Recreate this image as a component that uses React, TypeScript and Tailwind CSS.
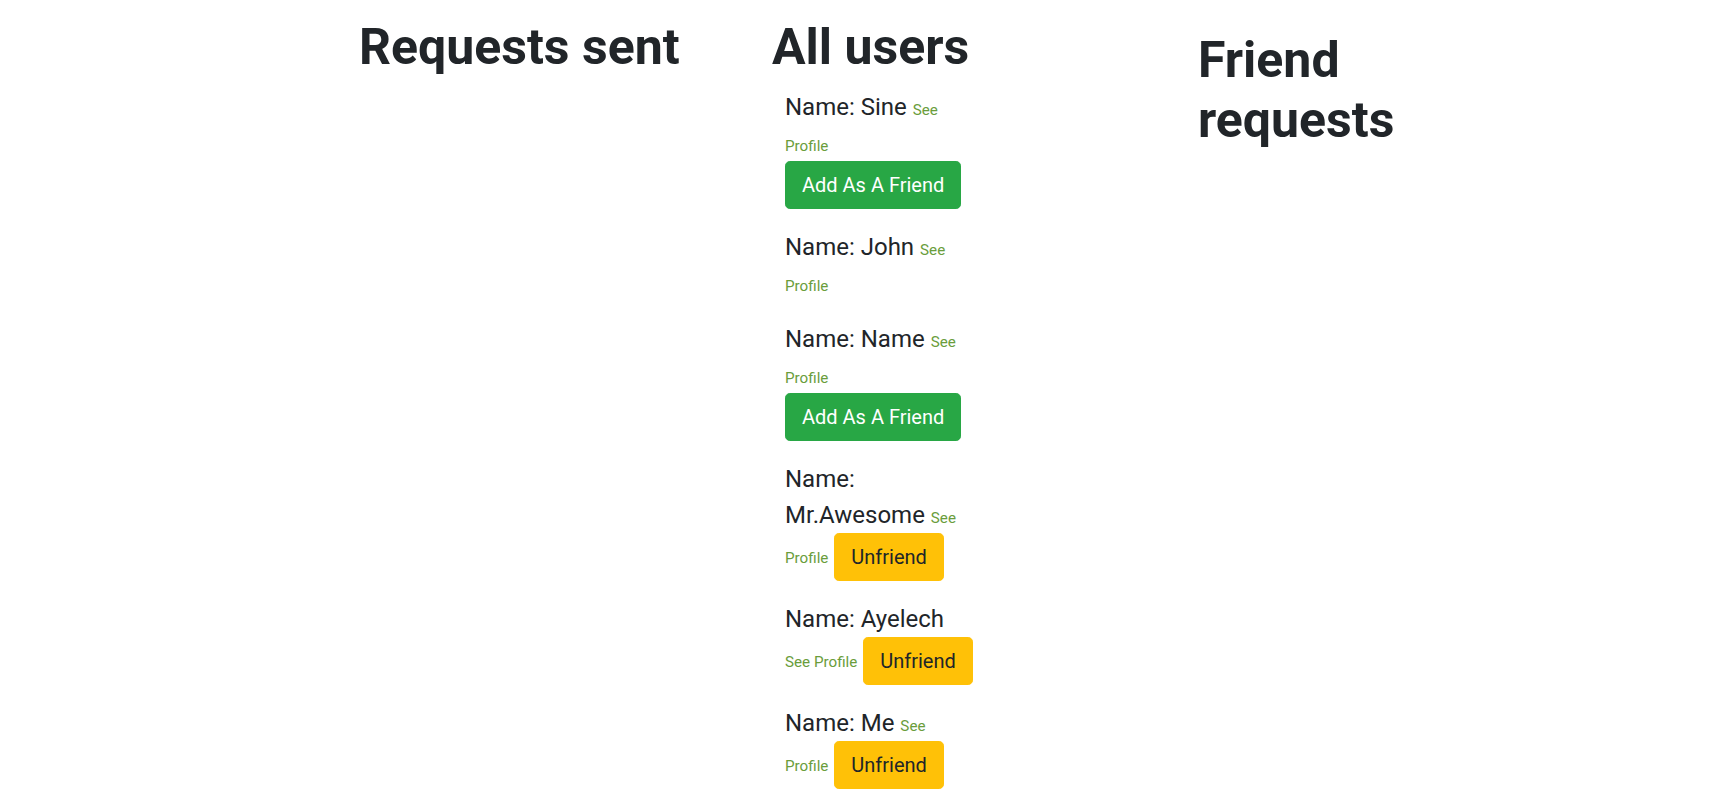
import React from "react";

type User = { name: string; action: "add" | "unfriend" | null; breakLink?: boolean };

const users: User[] = [
  { name: "Sine", action: "add" },
  { name: "John", action: null },
  { name: "Name", action: "add" },
  { name: "Mr.Awesome", action: "unfriend" },
  { name: "Ayelech", action: "unfriend" },
  { name: "Me", action: "unfriend", breakLink: true },
];

function UserItem({ user }: { user: User }) {
  return (
    <div className="text-[24px] leading-[1.5] text-[#212529]">
      Name: {user.name}{" "}
      <a href="#" className="text-[15.2px] text-[#6a9d3c] no-underline">
        {user.breakLink ? (
          <>
            See
            <br />
            Profile
          </>
        ) : (
          "See Profile"
        )}
      </a>
      {user.action === "add" && (
        <>
          {" "}
          <button className="inline-block align-middle rounded-[4.8px] border border-[#28a745] bg-[#28a745] px-4 py-2 text-[20px] leading-[1.5] text-white">
            Add As A Friend
          </button>
        </>
      )}
      {user.action === "unfriend" && (
        <>
          {" "}
          <button className="inline-block align-middle rounded-[4.8px] border border-[#ffc107] bg-[#ffc107] px-4 py-2 text-[20px] leading-[1.5] text-[#212529]">
            Unfriend
          </button>
        </>
      )}
    </div>
  );
}

export default function App() {
  return (
    <div
      className="min-h-screen bg-white text-[#212529]"
      style={{ fontFamily: "Roboto, 'Liberation Sans', sans-serif" }}
    >
      <div className="flex pl-[359px]">
        <div className="w-[413px] shrink-0">
          <h1 className="mt-[17px] text-[50px] font-bold leading-[1.2]">Requests sent</h1>
        </div>
        <div className="w-[426px] shrink-0">
          <h1 className="mt-[17px] mb-[12px] text-[50px] font-bold leading-[1.2]">All users</h1>
          <div className="ml-[13px] flex w-[188px] flex-col gap-[20px] pb-6">
            {users.map((u) => (
              <UserItem key={u.name} user={u} />
            ))}
          </div>
        </div>
        <div className="w-[250px] shrink-0">
          <h1 className="mt-[30px] text-[50px] font-bold leading-[1.2]">Friend requests</h1>
        </div>
      </div>
    </div>
  );
}
